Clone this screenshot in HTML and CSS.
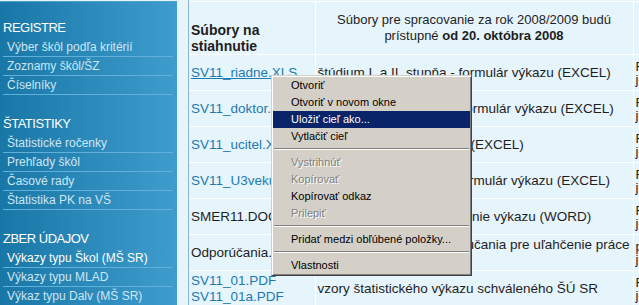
FILE: index.html
```html
<!DOCTYPE html>
<html lang="sk">
<head>
<meta charset="UTF-8" />
<title>Štatistika školstva - Súbory na stiahnutie</title>
<link rel="stylesheet" href="styles.css">
</head>
<body>

<div class="page">
  <aside class="sidebar">
    <h3>REGISTRE</h3>
    <ul>
      <li><a href="#">Výber škôl podľa kritérií</a></li>
      <li><a href="#">Zoznamy škôl/ŠZ</a></li>
      <li><a href="#">Číselníky</a></li>
    </ul>
    <h3>ŠTATISTIKY</h3>
    <ul>
      <li><a href="#">Štatistické ročenky</a></li>
      <li><a href="#">Prehľady škôl</a></li>
      <li><a href="#">Časové rady</a></li>
      <li><a href="#">Štatistika PK na VŠ</a></li>
    </ul>
    <h3>ZBER ÚDAJOV</h3>
    <ul>
      <li class="active"><a href="#">Výkazy typu Škol (MŠ SR)</a></li>
      <li><a href="#">Výkazy typu MLAD</a></li>
      <li><a href="#">Výkaz typu Dalv (MŠ SR)</a></li>
    </ul>
  </aside>

  <main class="content">
    <table class="files">
      <colgroup>
        <col class="c1">
        <col class="c2">
        <col class="c3">
      </colgroup>
      <tr class="head">
        <th class="col-file">Súbory na stiahnutie</th>
        <th class="col-desc">Súbory pre spracovanie za rok 2008/2009 budú prístupné <b>od 20. októbra 2008</b></th>
        <th></th>
      </tr>
      <tr>
        <td><a href="#" class="hover">SV11_riadne.XLS</a></td>
        <td>štúdium I. a II. stupňa - formulár výkazu (EXCEL)</td>
        <td class="col-note">Fakulty<br>jednotlivo</td>
      </tr>
      <tr>
        <td><a href="#">SV11_doktor.XLS</a></td>
        <td>doktorandské štúdium - formulár výkazu (EXCEL)</td>
        <td class="col-note">Fakulty<br>jednotlivo</td>
      </tr>
      <tr>
        <td><a href="#">SV11_ucitel.XLS</a></td>
        <td>učitelia - formulár výkazu (EXCEL)</td>
        <td class="col-note">Fakulty<br>jednotlivo</td>
      </tr>
      <tr>
        <td><a href="#">SV11_U3veku.XLS</a></td>
        <td>štúdium tretieho veku - formulár výkazu (EXCEL)</td>
        <td class="col-note">Fakulty<br>jednotlivo</td>
      </tr>
      <tr>
        <td>SMER11.DOC</td>
        <td>Stručné pokyny na vyplnenie výkazu (WORD)</td>
        <td class="col-note">Fakulty<br>jednotlivo</td>
      </tr>
      <tr>
        <td>Odporúčania.DOC</td>
        <td>Metodické pokyny, odporúčania pre uľahčenie práce so súbormi</td>
        <td class="col-note">pre<br>jednotlivé</td>
      </tr>
      <tr>
        <td><a href="#">SV11_01.PDF</a><br><a href="#">SV11_01a.PDF</a></td>
        <td>vzory štatistického výkazu schváleného ŠÚ SR</td>
        <td class="col-note">Fakulty<br>jednotlivo</td>
      </tr>
    </table>
  </main>
</div>

<ul class="context-menu">
  <li>Otvoriť</li>
  <li>Otvoriť v novom okne</li>
  <li class="selected">Uložiť cieľ ako...</li>
  <li>Vytlačiť cieľ</li>
  <li class="sep"></li>
  <li class="disabled">Vystrihnúť</li>
  <li class="disabled">Kopírovať</li>
  <li>Kopírovať odkaz</li>
  <li class="disabled">Prilepiť</li>
  <li class="sep"></li>
  <li>Pridať medzi obľúbené položky...</li>
  <li class="sep"></li>
  <li>Vlastnosti</li>
</ul>

</body>
</html>
```

FILE: styles.css
```css
html, body {
  margin: 0;
  padding: 0;
  overflow: hidden;
  background: #e6f4fc;
}
body {
  font-family: "Liberation Sans", Arial, sans-serif;
}
.page {
  display: flex;
  align-items: flex-start;
  height: 305px;
}

/* left menu */
.sidebar {
  width: 177px;
  flex-shrink: 0;
  height: 304px;
  background: linear-gradient(to right, #1877a6, #3f9dcd);
  border-top: 1px solid #4ba3d0;
  margin-top: 1px;
}
.sidebar h3 {
  margin: 20px 0 1px 3px;
  font-size: 13px;
  letter-spacing: -0.5px;
  font-weight: normal;
  line-height: 18px;
  color: #fff;
}
.sidebar h3:first-child {
  margin-top: 17px;
}
.sidebar ul {
  list-style: none;
  margin: 0;
  padding: 0;
}
.sidebar li {
  margin: 0 4px 0 3px;
  border-bottom: 1px solid #5fb0da;
  line-height: 18px;
}
.sidebar li a {
  display: block;
  padding-left: 4px;
  font-size: 12px;
  color: #cde6f4;
  text-decoration: none;
}
.sidebar li.active a {
  color: #fff;
}

/* files table */
.content {
  flex: 1;
  margin-left: 11px;
  border-left: 1px solid #8fb4cd;
  height: 305px;
}
.files {
  border-collapse: collapse;
  table-layout: fixed;
  width: 650px;
  font-size: 13.5px;
  color: #1e1e1e;
  margin-top: 1px;
}
.files col.c1 { width: 126px; }
.files col.c2 { width: 318px; }
.files col.c3 { width: 206px; }
.files tr {
  height: 36px;
}
.files tr.head {
  height: 51px;
}
.files th,
.files td {
  border: 1px solid #fff;
  padding: 0 2px;
  vertical-align: middle;
  line-height: 16px;
  overflow: hidden;
  white-space: nowrap;
}
.files td:nth-child(2) {
  white-space: normal;
  padding-right: 0;
}
.files th:first-child,
.files td:first-child {
  border-left: none;
}
.files th.col-file {
  text-align: left;
  font-size: 14px;
  white-space: normal;
  padding-top: 20px;
}
.files th.col-desc {
  font-size: 13px;
  font-weight: normal;
  text-align: center;
  white-space: normal;
  padding: 0 6px;
}
.files td.col-note {
  font-size: 13px;
  line-height: 13px;
}
.files a {
  color: #1b7bb0;
  text-decoration: none;
}
.files a.hover {
  text-decoration: underline;
}
.files td:first-child {
  font-size: 13.5px;
}

/* right-click menu */
.context-menu {
  position: absolute;
  left: 271px;
  top: 75px;
  width: 197px;
  margin: 0;
  padding: 1px;
  list-style: none;
  background: #d4d0c8;
  border: 1px solid;
  border-color: #d4d0c8 #404040 #404040 #d4d0c8;
  box-shadow: inset 1px 1px 0 #fff, inset -1px -1px 0 #808080;
  font-size: 11px;
  color: #000;
}
.context-menu li {
  height: 17px;
  line-height: 17px;
  padding-left: 18px;
  white-space: nowrap;
}
.context-menu li.selected {
  background: #0a246a;
  color: #fff;
}
.context-menu li.disabled {
  color: #808080;
  text-shadow: 1px 1px 0 #fff;
}
.context-menu li.sep {
  height: 9px;
  padding: 0;
  margin: 0 1px;
  position: relative;
}
.context-menu li.sep::after {
  content: "";
  position: absolute;
  left: 0;
  right: 0;
  top: 3px;
  border-top: 1px solid #808080;
  border-bottom: 1px solid #fff;
}
```
